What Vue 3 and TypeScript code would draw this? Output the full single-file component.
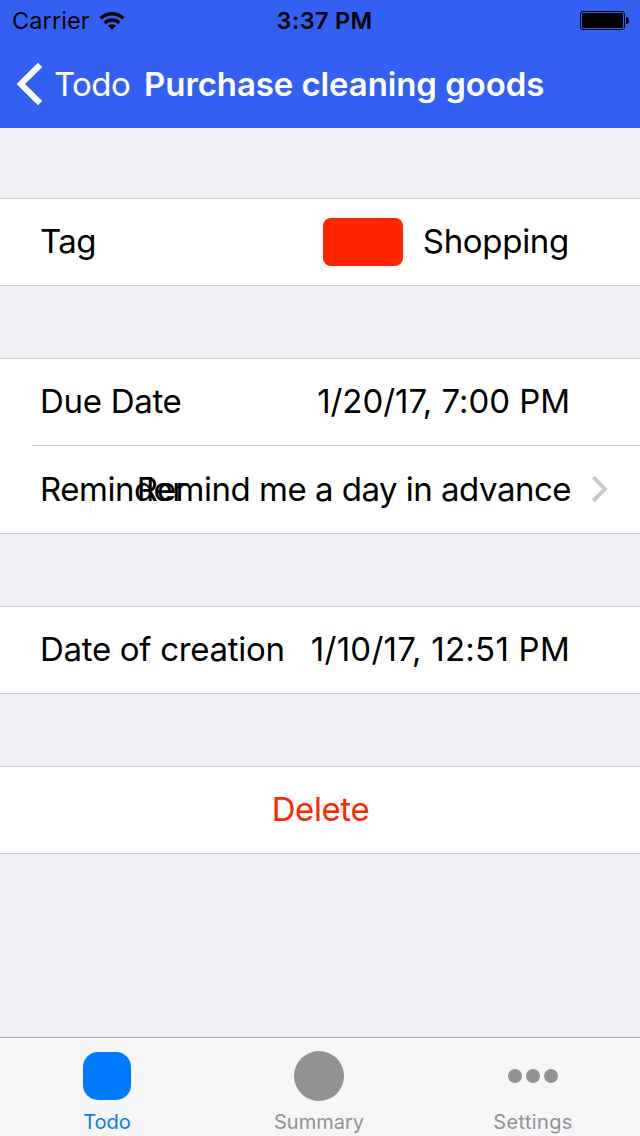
<script setup lang="ts">
interface Row {
  id: string
  label: string
  value: string
  swatch?: boolean
  disclosure?: boolean
}

const groups: Row[][] = [
  [{ id: 'tag', label: 'Tag', value: 'Shopping', swatch: true }],
  [
    { id: 'due', label: 'Due Date', value: '1/20/17, 7:00 PM' },
    { id: 'reminder', label: 'Reminder', value: 'Remind me a day in advance', disclosure: true },
  ],
  [{ id: 'created', label: 'Date of creation', value: '1/10/17, 12:51 PM' }],
]
</script>

<template>
  <div class="screen">
    <header class="header">
      <div class="status">
        <div class="carrier">
          <span class="carrier-name">Carrier</span>
          <svg class="wifi" width="26" height="18" viewBox="0 0 26 18">
            <g fill="none" stroke="#000" stroke-width="3.4">
              <path d="M1.6 6.3 A16.4 16.4 0 0 1 24.4 6.3" />
              <path d="M5.8 10.9 A10.4 10.4 0 0 1 20.2 10.9" />
            </g>
            <path d="M13 17.8 L9 13.8 A5.8 5.8 0 0 1 17 13.8 Z" />
          </svg>
        </div>
        <span class="time">3:37 PM</span>
        <svg class="battery" width="50" height="20" viewBox="0 0 50 20">
          <rect x="0.5" y="0.5" width="44" height="18" rx="2.5" fill="none" stroke="#000" />
          <rect x="2" y="2" width="41" height="15" rx="1.3" />
          <path d="M46 6 h1 q2 0.5 2 3.5 t-2 3.5 h-1 z" />
        </svg>
      </div>
      <nav class="nav">
        <svg class="chevron-back" width="27" height="44" viewBox="0 0 27 44">
          <path d="M0.6 22 L22 0.8 L26.2 5 L9 22 L26.2 39 L22 43.2 Z" fill="#fff" />
        </svg>
        <span class="back">Todo</span>
        <h1 class="title">Purchase cleaning goods</h1>
      </nav>
    </header>

    <main class="content">
      <section v-for="(group, i) in groups" :key="i" class="group">
        <div v-for="row in group" :key="row.id" class="row" :class="row.id">
          <span class="label">{{ row.label }}</span>
          <span v-if="row.swatch" class="swatch"></span>
          <span class="value">{{ row.value }}</span>
          <svg v-if="row.disclosure" class="disclosure" width="18" height="28" viewBox="0 0 18 28">
            <path d="M2.2 2.2 L14 14 L2.2 25.8" fill="none" stroke="#c7c7cc" stroke-width="3.8" />
          </svg>
        </div>
      </section>
      <section class="group">
        <button class="delete">Delete</button>
      </section>
    </main>

    <footer class="tabs">
      <div class="tab active">
        <svg class="tab-icon" width="50" height="50" viewBox="0 0 50 50">
          <rect x="1" y="1" width="48" height="48" rx="15" fill="currentColor" />
        </svg>
        <span class="tab-label tab-todo">Todo</span>
      </div>
      <div class="tab">
        <svg class="tab-icon" width="50" height="50" viewBox="0 0 50 50">
          <circle cx="25" cy="25" r="25" fill="currentColor" />
        </svg>
        <span class="tab-label tab-summary">Summary</span>
      </div>
      <div class="tab">
        <svg class="tab-icon" width="50" height="50" viewBox="0 0 50 50">
          <g fill="currentColor">
            <circle cx="7" cy="25" r="7" />
            <circle cx="25" cy="25" r="7" />
            <circle cx="43" cy="25" r="7" />
          </g>
        </svg>
        <span class="tab-label tab-settings">Settings</span>
      </div>
    </footer>
  </div>
</template>

<style>
body {
  margin: 0;
}
</style>

<style scoped>
.screen {
  width: 640px;
  height: 1136px;
  display: flex;
  flex-direction: column;
  overflow: hidden;
  background: #efeff4;
  color: #000;
  font-family: Inter, "Liberation Sans", sans-serif;
  font-size: 33px;
  white-space: nowrap;
}
.header {
  height: 128px;
  background: #345ff3;
}
.status {
  height: 40px;
  display: grid;
  grid-template-columns: 1fr auto 1fr;
  align-items: center;
  font-size: 23.5px;
  line-height: 40px;
  padding-top: 1px;
  box-sizing: border-box;
}
.carrier {
  display: flex;
  align-items: center;
  padding-left: 12px;
}
.carrier-name {
  letter-spacing: 0.1px;
}
.wifi {
  margin-left: 9px;
  margin-bottom: 1px;
}
.time {
  font-weight: 600;
  letter-spacing: 0.3px;
  padding-left: 9px;
}
.battery {
  justify-self: end;
  margin-right: 10px;
}
.nav {
  height: 88px;
  display: flex;
  align-items: center;
  color: #fff;
}
.chevron-back {
  margin-left: 16px;
}
.back {
  margin-left: 11px;
  letter-spacing: -0.6px;
}
.title {
  margin: 0 0 0 14px;
  font-size: 33px;
  font-weight: 600;
  letter-spacing: -0.1px;
}
.content {
  flex: 1;
  display: flex;
  flex-direction: column;
  gap: 72px;
  padding-top: 70px;
}
.group {
  background: #fff;
  border-top: 1px solid #c8c7cc;
  border-bottom: 1px solid #c8c7cc;
}
.row {
  height: 86px;
  display: flex;
  align-items: center;
  padding: 0 70px 0 40px;
}
.row + .row {
  height: 88px;
  box-sizing: border-box;
  margin-left: 32px;
  padding: 0 31px 0 8px;
  border-top: 1px solid #c8c7cc;
}
.row.tag {
  padding-right: 71px;
}
.label,
.value {
  padding-bottom: 2px;
}
.label {
  flex: 0 0 auto;
  letter-spacing: -0.3px;
}
.tag .label {
  letter-spacing: -0.6px;
}
.value {
  margin-left: auto;
}
.swatch {
  width: 80px;
  height: 48px;
  border-radius: 8px;
  background: #ff2600;
  margin-left: auto;
}
.swatch + .value {
  margin-left: 20px;
  letter-spacing: -0.3px;
}
.due .value {
  letter-spacing: -0.06px;
}
.created .value {
  letter-spacing: 0.25px;
}
.reminder .label {
  width: 0;
  letter-spacing: -0.5px;
}
.reminder .value {
  letter-spacing: -0.5px;
}
.disclosure {
  margin-left: 20px;
  margin-bottom: 1px;
}
.delete {
  display: block;
  width: 100%;
  height: 86px;
  padding: 0 0 2px 1px;
  border: 0;
  background: none;
  color: #ff2600;
  font: inherit;
  letter-spacing: -0.4px;
}
.tabs {
  height: 98px;
  display: grid;
  grid-template-columns: 214px 210px 218px;
  border-top: 1px solid #a4a4a8;
  background: #f6f6f8;
}
.tab {
  display: flex;
  flex-direction: column;
  align-items: center;
  padding-top: 13px;
  color: #929292;
}
.tab.active {
  color: #007aff;
}
.tab-label {
  margin-top: 9px;
  font-size: 20px;
  line-height: 24px;
}
.tab-settings {
  letter-spacing: 0.35px;
}
</style>
